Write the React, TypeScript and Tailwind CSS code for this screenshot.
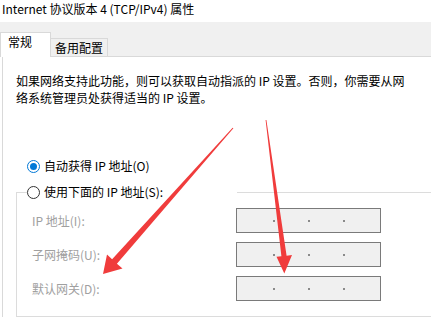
import React from 'react';

const IpBox: React.FC = () => (
  <div className="flex h-[25px] w-[145px] items-center border border-[#7a7a7a] bg-[#f0f0f0]">
    <span className="w-[36px]" />
    <span className="mt-[1px] h-[2px] w-[2px] bg-[#8a8a8a]" />
    <span className="w-[33px]" />
    <span className="mt-[1px] h-[2px] w-[2px] bg-[#8a8a8a]" />
    <span className="w-[33px]" />
    <span className="mt-[1px] h-[2px] w-[2px] bg-[#8a8a8a]" />
  </div>
);

const fields = ['IP 地址(I):', '子网掩码(U):', '默认网关(D):'];

export default function App() {
  return (
    <div
      className="relative h-[317px] w-[431px] overflow-hidden bg-white text-[12px] text-black"
      style={{ fontFamily: '"Noto Sans CJK SC", "Noto Sans", sans-serif' }}
    >
      {/* Title */}
      <div className="h-[22px] pl-[2px] pt-[1px] leading-[16px]">Internet 协议版本 4 (TCP/IPv4) 属性</div>

      {/* Tabs */}
      <div className="flex h-[35px] items-end border-b border-[#d9d9d9] bg-[#f0f0f0]">
        <div className="mb-[-1px] h-[25px] w-[51px] border border-b-0 border-[#d9d9d9] bg-white pl-[7px] pt-[1px] leading-[16px]">
          常规
        </div>
        <div className="h-[18px] w-[57px] border border-b-0 border-l-0 border-[#d9d9d9] bg-[#f0f0f0] pl-[4px] leading-[17px]">
          备用配置
        </div>
      </div>

      {/* Panel */}
      <div className="ml-[2px] h-[260px] border-l border-[#d9d9d9] pl-[13px] pt-[15px]">
        <p className="leading-[17px]">
          如果网络支持此功能，则可以获取自动指派的 IP 设置。否则，你需要从网
          <br />
          络系统管理员处获得适当的 IP 设置。
        </p>

        <div className="mt-[52px] flex h-[16px] items-center pl-[11px]">
          <span className="flex h-[13px] w-[13px] items-center justify-center rounded-full border border-[#0078d7]">
            <span className="h-[7px] w-[7px] rounded-full bg-[#0078d7]" />
          </span>
          <span className="ml-[4px] leading-[16px]">自动获得 IP 地址(O)</span>
        </div>

        <fieldset className="mt-[10px] w-[440px] border border-[#dcdcdc] pb-[15px]">
          <legend className="ml-[10px] w-[210px]">
            <div className="flex h-[16px] items-center">
              <span className="h-[13px] w-[13px] rounded-full border border-[#333333]" />
              <span className="ml-[4px] leading-[16px]">使用下面的 IP 地址(S):</span>
            </div>
          </legend>
          <div className="mt-[8px] flex flex-col gap-[9px] pl-[15px]">
            {fields.map((f) => (
              <div key={f} className="flex items-center">
                <span className="w-[204px] leading-[16px] text-[#a0a0a0]">{f}</span>
                <IpBox />
              </div>
            ))}
          </div>
        </fieldset>
      </div>

      {/* Annotation arrows */}
      <svg className="pointer-events-none absolute left-0 top-0" width="431" height="317" viewBox="0 0 431 317">
        <polygon
          fill="#f03c3c"
          points="232.6,127.7 233.4,128.3 116.9,263.7 122.5,268.5 103,274 107,254.5 112.1,259.3"
        />
        <polygon
          fill="#f03c3c"
          points="265.6,120 266.4,120 286.6,255.7 292,255 284.3,273.5 276.5,256.7 281.4,256.3"
        />
      </svg>
    </div>
  );
}
